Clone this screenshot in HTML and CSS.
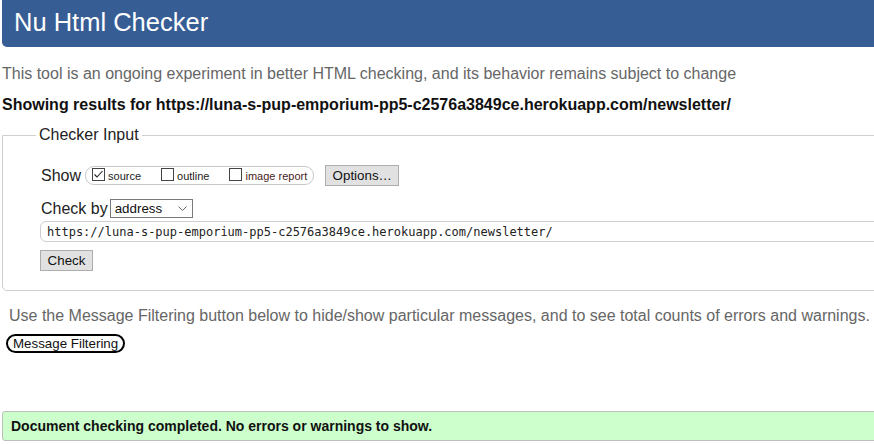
FILE: index.html
```html
<!DOCTYPE html>
<html lang="en">
<head>
<meta charset="utf-8">
<title>Nu Html Checker</title>
<link rel="stylesheet" href="styles.css">
</head>
<body>
<div class="page">
  <h1 class="title">Nu Html Checker</h1>
  <p class="intro">This tool is an ongoing experiment in better HTML checking, and its behavior remains subject to change</p>
  <p class="results">Showing results for https://luna-s-pup-emporium-pp5-c2576a3849ce.herokuapp.com/newsletter/</p>

  <fieldset class="checker">
    <legend class="legend">Checker Input</legend>
    <div class="row row-show">
      <span class="label">Show</span>
      <span class="group">
        <span class="opt">
          <span class="box"><svg width="11" height="11" viewBox="0 0 11 11"><path d="M1.5 5.5 L4 8 L9.5 2" fill="none" stroke="#222" stroke-width="1.1"/></svg></span>
          <span class="opt-text">source</span>
        </span>
        <span class="opt">
          <span class="box"></span>
          <span class="opt-text">outline</span>
        </span>
        <span class="opt">
          <span class="box"></span>
          <span class="opt-text opt-red">image report</span>
        </span>
      </span>
      <button class="btn btn-options" type="button">Options…</button>
    </div>
    <div class="row row-by">
      <span class="label">Check by</span>
      <span class="select-wrap">
        <select class="select"><option>address</option></select>
        <svg class="chev" width="9" height="5" viewBox="0 0 9 5"><path d="M0.5 0.5 L4.5 4.5 L8.5 0.5" fill="none" stroke="#666" stroke-width="1"/></svg>
      </span>
    </div>
    <div class="row row-url">
      <input class="url" type="text" value="https://luna-s-pup-emporium-pp5-c2576a3849ce.herokuapp.com/newsletter/">
    </div>
    <div class="row row-check">
      <button class="btn btn-check" type="button">Check</button>
    </div>
  </fieldset>

  <p class="filter-note">Use the Message Filtering button below to hide/show particular messages, and to see total counts of errors and warnings.</p>
  <button class="btn-filter" type="button">Message Filtering</button>

  <div class="success">Document checking completed. No errors or warnings to show.</div>
</div>
</body>
</html>
```

FILE: styles.css
```css
html {
  overflow: hidden;
  background: #fff;
}

body {
  margin: 0;
  padding: 0 0 0 2px;
  font-family: "Liberation Sans", Arial, sans-serif;
  font-size: 16px;
  line-height: 18px;
  color: #222;
}

.page {
  width: 960px;
}

.title {
  margin: 0;
  height: 47px;
  padding-left: 12px;
  background: #375d95;
  color: #fff;
  font-size: 25.5px;
  font-weight: normal;
  line-height: 45px;
  border-bottom-left-radius: 5px;
}

.intro {
  margin: 18px 0 0 0;
  color: #666;
}

.results {
  margin: 13px 0 0 0;
  font-weight: bold;
  color: #111;
}

.checker {
  margin: 12px 0 0 0;
  padding: 21px 0 19px 38px;
  border: 1px solid #cfcfcf;
  border-radius: 0 0 0 5px;
  min-width: 0;
}

.legend {
  margin-left: -5px;
  padding: 0 3px;
  font-size: 16px;
  line-height: 18px;
  color: #222;
}

.row {
  display: flex;
  align-items: center;
}

.row-show {
  height: 21px;
}

.label {
  color: #222;
}

.group {
  display: inline-flex;
  align-items: center;
  gap: 20px;
  height: 17px;
  margin-left: 4px;
  padding: 0 6px 0 6px;
  border: 1px solid #c8c8c8;
  border-radius: 9px;
  font-size: 11px;
}

.opt {
  display: inline-flex;
  align-items: center;
  gap: 3px;
}

.box {
  display: inline-flex;
  align-items: center;
  justify-content: center;
  width: 11px;
  height: 11px;
  border: 1px solid #444;
  background: #fff;
  margin-top: -2px;
}

.opt-text {
  color: #222;
  line-height: 13px;
  position: relative;
  top: 1px;
}

.opt-red {
  color: #4a1c1c;
}

.btn {
  font-family: "Liberation Sans", Arial, sans-serif;
  font-size: 13.33px;
  color: #111;
  background: #e1e1e1;
  border: 1px solid #adadad;
  border-radius: 0;
  padding: 0;
  height: 21px;
}

.btn-options {
  width: 74px;
  margin-left: 11px;
}

.row-by {
  margin-top: 13px;
  height: 19px;
}

.select-wrap {
  position: relative;
  display: inline-block;
  margin-left: 2px;
  height: 19px;
}

.select {
  appearance: none;
  -webkit-appearance: none;
  width: 83px;
  height: 19px;
  margin: 0;
  padding: 0 0 0 4px;
  border: 1px solid #7a7a7a;
  border-radius: 0;
  background: #fff;
  font-family: "Liberation Sans", Arial, sans-serif;
  font-size: 13.33px;
  color: #111;
  display: block;
}

.chev {
  position: absolute;
  right: 6px;
  top: 7px;
}

.row-url {
  margin-top: 3px;
}

.url {
  width: 900px;
  height: 21px;
  box-sizing: border-box;
  margin: 0 0 0 -1px;
  padding: 0 0 0 6px;
  border: 1px solid #cfcfcf;
  border-radius: 6px;
  font-family: "DejaVu Sans Mono", "Liberation Mono", monospace;
  font-size: 12px;
  color: #222;
  background: #fff;
}

.row-check {
  margin-top: 8px;
}

.btn-check {
  width: 53px;
  margin-left: -1px;
}

.filter-note {
  margin: 16px 0 0 0;
  padding-left: 7px;
  color: #666;
}

.btn-filter {
  display: block;
  margin: 9px 0 0 4px;
  height: 19px;
  padding: 0 5px;
  border: 2px solid #000;
  border-radius: 10px;
  background: #fff;
  font-family: "Liberation Sans", Arial, sans-serif;
  font-size: 13.33px;
  line-height: 15px;
  color: #111;
}

.success {
  margin-top: 58px;
  height: 28px;
  padding-left: 8px;
  border: 1px solid #bdbdbd;
  border-radius: 3px 0 0 3px;
  background: #ccffcc;
  font-size: 14px;
  font-weight: bold;
  line-height: 28px;
  color: #111;
}
```
